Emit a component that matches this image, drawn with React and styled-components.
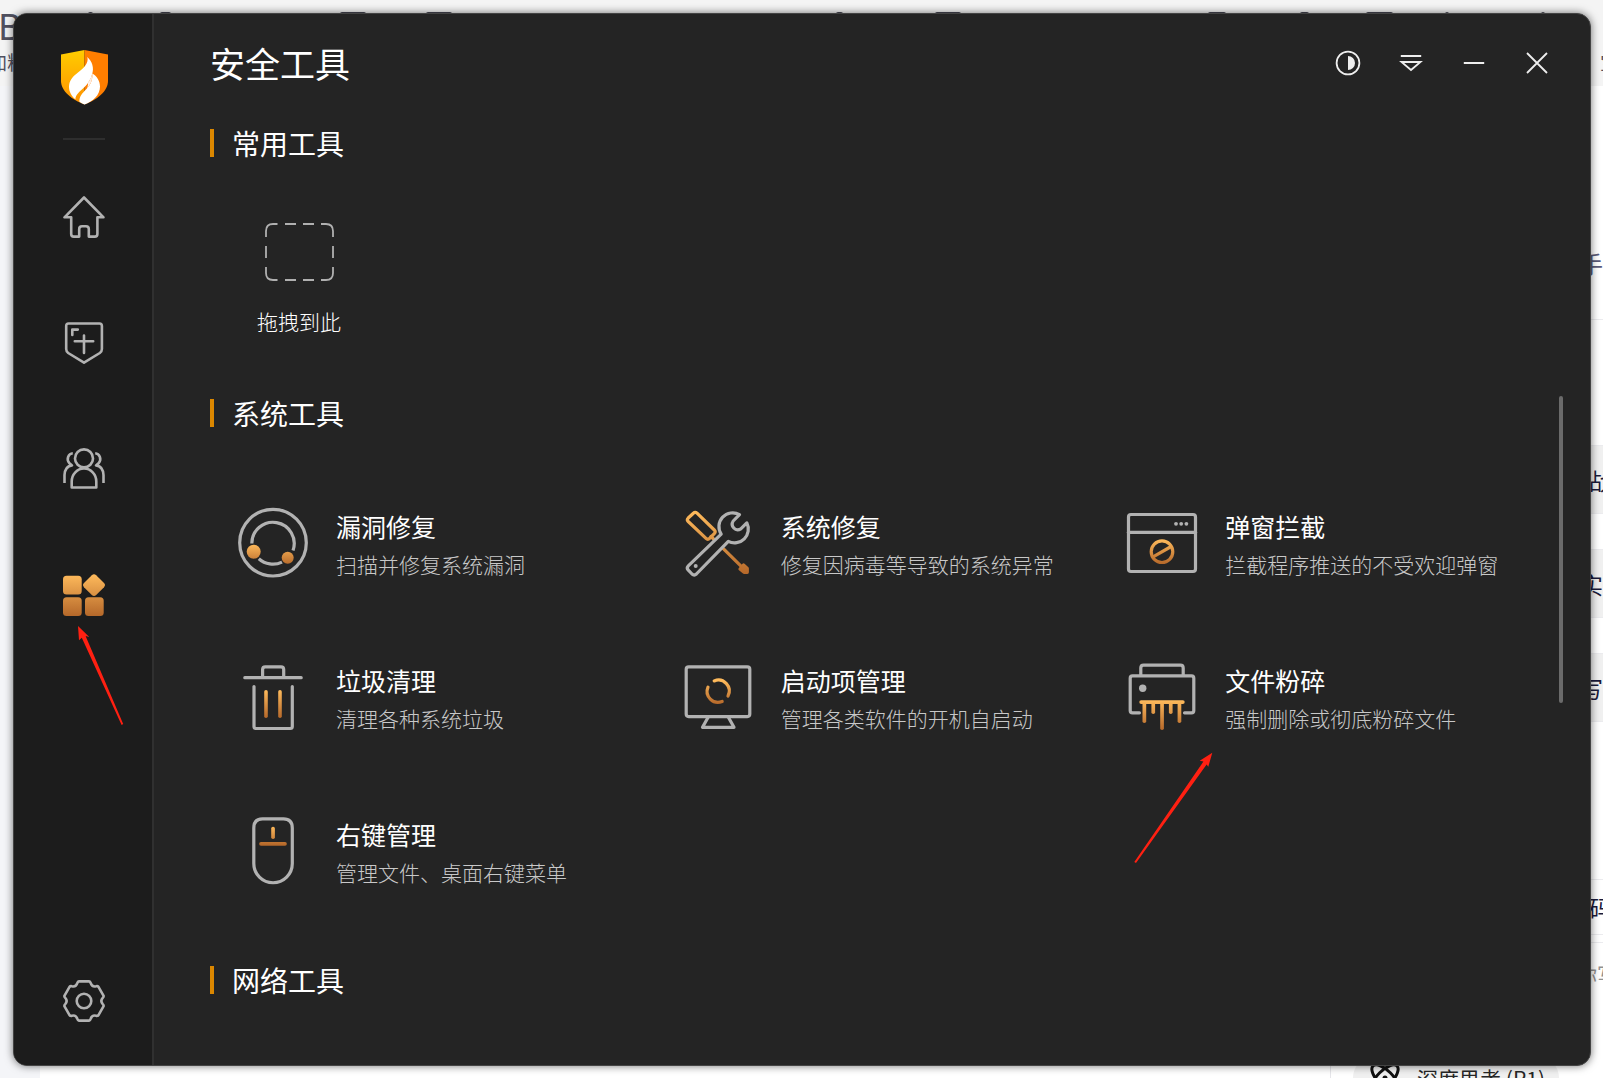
import styled, { createGlobalStyle, css } from 'styled-components';

const GlobalStyle = createGlobalStyle`
  * {
    box-sizing: border-box;
  }
  body {
    margin: 0;
    font-family: 'Noto Sans CJK SC', sans-serif;
  }
  button {
    margin: 0;
    padding: 0;
    border: 0;
    background: none;
    color: inherit;
    font: inherit;
    text-align: left;
    cursor: pointer;
  }
  svg {
    display: block;
    flex: none;
  }
`;

// the page behind and the window share one grid cell
const Desktop = styled.div`
  display: grid;
  grid-template-columns: minmax(0, 1fr);
  min-height: 100vh;
  overflow: hidden;

  > * {
    grid-area: 1 / 1;
  }
`;

/* ---------- page behind the window ---------- */

const Backdrop = styled.div`
  display: grid;
  grid-template-columns: 40px minmax(0, 1fr) 26px;
  grid-template-rows: 86px 1fr;
  overflow: hidden;
  background: #fff;
`;

const Toolbar = styled.div`
  grid-column: 1 / -1;
  display: flex;
  overflow: hidden;
  background: #f4f4f4;
  color: #50505f;
`;

const FormatItem = styled.div`
  display: flex;
  flex-direction: column;
  align-items: flex-end;
  width: 26px;
  padding-top: 4px;
  font-size: 19px;
  line-height: 24px;
  white-space: nowrap;
`;

const FormatLetter = styled.span`
  width: 28px;
  font: 36px / 46px 'Noto Sans', sans-serif;
`;

const ToolbarIcons = styled.svg`
  flex: 1;
  min-width: 0;
`;

const ToolbarEnd = styled.span`
  width: 3px;
  padding-top: 50px;
  font-size: 19px;
  line-height: 24px;
`;

const Gutter = styled.div`
  background: #f4f5f8;
`;

const PageBody = styled.div`
  display: flex;
  justify-content: flex-end;
  align-items: flex-end;
`;

const Composer = styled.div`
  height: 22px;
  padding: 0 18px 0 22px;
  border-left: 1px solid #e6e6ea;
`;

const ThinkButton = styled.button`
  display: flex;
  align-items: center;
  gap: 16px;
  height: 44px;
  padding: 0 14px 0 16px;
  border-radius: 22px;
  background: #f0f0f0;
  color: #262626;
  font-size: 21px;
  white-space: nowrap;
`;

const SideList = styled.div`
  display: flex;
  flex-direction: column;
  overflow: hidden;
  color: #1a1a3a;
  font-size: 23px;
  white-space: nowrap;
`;

const SideRow = styled.div`
  display: flex;
  align-items: center;
  justify-content: ${(p) => (p.$start ? 'flex-start' : 'flex-end')};
  height: ${(p) => p.$height}px;
  padding-left: ${(p) => (p.$start ? 12 : 0)}px;
  background: ${(p) => (p.$shade ? '#f0f0f0' : 'transparent')};
  border-bottom: 1px solid ${(p) => (p.$line ? '#ebebee' : 'transparent')};
  flex: none;
`;

const Placeholder = styled.span`
  width: 26px;
  color: #909090;
  font-size: 20px;
`;

const Muted = styled.span`
  color: #5a5a78;
`;

/* ---------- window ---------- */

const Window = styled.div`
  display: flex;
  margin: 13px 12px 12px 13px;
  border: 1px solid #444;
  border-radius: 14px;
  background: #242424;
  color: #fff;
  box-shadow: 0 0 9px rgba(0, 0, 0, 0.55);
  overflow: hidden;
  z-index: 1;
`;

const Sidebar = styled.nav`
  display: flex;
  flex-direction: column;
  align-items: center;
  flex: none;
  width: 140px;
  padding: 36px 0 43px 2px;
  border-right: 2px solid #303030;
  background: #1c1c1c;
`;

const Divider = styled.hr`
  width: 42px;
  height: 2px;
  margin: 33px 0 56px;
  border: 0;
  background: #2e2e2e;
`;

const NavList = styled.div`
  display: flex;
  flex-direction: column;
  gap: 84px;
  flex: 1;
`;

const NavButton = styled.button`
  position: relative;
  width: 42px;
  height: 42px;
`;

const Main = styled.main`
  position: relative;
  flex: 1;
  min-width: 0;
  padding: 0 19px 64px 56px;
`;

const Header = styled.header`
  display: flex;
  align-items: center;
  justify-content: space-between;
  height: 98px;
  margin-bottom: 13px;
`;

const Title = styled.h1`
  margin: 0;
  font-size: 35px;
  font-weight: 400;
  line-height: 48px;
`;

const WindowControls = styled.div`
  display: flex;
  gap: 37px;
  padding-right: 21px;
`;

const ControlButton = styled.button`
  width: 26px;
  height: 26px;
`;

const SectionTitle = styled.h2`
  display: flex;
  align-items: center;
  gap: 18px;
  margin: 0;
  font-size: 28px;
  font-weight: 400;
  line-height: 36px;

  &::before {
    content: '';
    width: 4px;
    height: 28px;
    background: #db8700;
  }
`;

const DropArea = styled.div`
  display: flex;
  flex-direction: column;
  align-items: center;
  gap: 26px;
  width: 84px;
  margin: 62px 0 60px 47px;
  font-size: 21px;
  font-weight: 300;
  line-height: 28px;
  white-space: nowrap;
`;

const ToolGrid = styled.div`
  display: grid;
  grid-template-columns: repeat(3, minmax(0, 1fr));
  row-gap: 82px;
  margin: 76px 0 75px 27px;
`;

const Tool = styled.button`
  position: relative;
  display: flex;
  align-items: center;
  gap: 27px;
  height: 72px;
  white-space: nowrap;
`;

const ToolText = styled.span`
  display: flex;
  flex-direction: column;
  gap: 4px;
  padding-top: 2px;
`;

const ToolName = styled.span`
  font-size: 25px;
  line-height: 36px;
`;

const ToolDesc = styled.span`
  color: #c8c8c8;
  font-size: 21px;
  font-weight: 300;
  line-height: 32px;
`;

const ScrollThumb = styled.div`
  position: absolute;
  top: 382px;
  right: 27px;
  width: 4px;
  height: 307px;
  border-radius: 2px;
  background: #6b6b6b;
`;

const arrowPlace = {
  nav: css`
    left: 13px;
    top: 50px;
  `,
  tool: css`
    left: 7px;
    top: 90px;
  `,
};

const Arrow = styled.svg`
  position: absolute;
  fill: #ff2012;
  pointer-events: none;
  ${(p) => arrowPlace[p.$place]}
`;

/* ---------- icons ---------- */

const LineSvg = styled.svg`
  fill: none;
  stroke: #b2b2b2;
  stroke-width: ${(p) => p.$line};
  stroke-linecap: round;
  stroke-linejoin: round;
`;

function NavIcon({ children }) {
  return (
    <LineSvg width="42" height="42" viewBox="0 0 42 42" $line={2.6}>
      {children}
    </LineSvg>
  );
}

function ToolIcon({ id, y1, y2, children }) {
  return (
    <LineSvg width="72" height="72" viewBox="0 0 72 72" $line={3.2}>
      <defs>
        <linearGradient id={id} gradientUnits="userSpaceOnUse" x1="0" x2="0" y1={y1} y2={y2}>
          <stop offset="0" stopColor="#ffbb5c" />
          <stop offset="1" stopColor="#b5682a" />
        </linearGradient>
      </defs>
      {children}
    </LineSvg>
  );
}

function Logo() {
  return (
    <svg width="47" height="55" viewBox="0 0 47 55">
      <defs>
        <linearGradient id="logoLeft" x1="0" x2="0" y1="0" y2="1">
          <stop offset="0" stopColor="#ffcd00" />
          <stop offset="1" stopColor="#ff9000" />
        </linearGradient>
        <linearGradient id="logoFold" x1="0" x2="1" y1="1" y2="0">
          <stop offset="0" stopColor="#fff" />
          <stop offset="1" stopColor="#ffe4d2" />
        </linearGradient>
      </defs>
      <path d="M23.5 0L0 4.5V31C0 41 11 50 23.5 54.5z" fill="url(#logoLeft)" />
      <path d="M23.5 0L47 4.5V31C47 41 36 50 23.5 54.5z" fill="#ff7e00" />
      <path d="M26.3 7C28 13 23 18 17 22.5C11 27 8 31 8 37C8 42 11 46.5 14.4 49.3C14.5 44.5 19 41.5 22.5 38C27 33.5 30 29 31 24.5C33.5 18 31 11 26.3 7z" fill="#fff" />
      <path d="M31.2 23.5C36 26 39 31 39 36.5C39 45 32 51.5 23.5 54.5C21.5 53.8 19.8 52.8 18.4 51.8C18 46.5 21.5 43 25 39.5C30 34.5 32 29 31.2 23.5z" fill="#fff" />
      <path d="M31.2 23.5C32 29 30 34 26 38.5C28 33 27 31 22.5 38C27 33.5 30 29 31.2 23.5z" fill="url(#logoFold)" />
    </svg>
  );
}

function gearPath() {
  const at = (x, y, i) => {
    const a = (i * Math.PI) / 3;
    const px = 21 + x * Math.cos(a) - y * Math.sin(a);
    const py = 21 + x * Math.sin(a) + y * Math.cos(a);
    return `${px.toFixed(2)} ${py.toFixed(2)}`;
  };
  let d = `M${at(-5, -19.6, 0)}`;
  for (let i = 0; i < 6; i++) {
    d += `L${at(5, -19.6, i)}Q${at(6.3, -19.4, i)} ${at(6.7, -17.8, i)}`;
    d += `Q${at(8, -13.8, i)} ${at(-6.7, -17.8, i + 1)}`;
    d += `Q${at(-6.3, -19.4, i + 1)} ${at(-5, -19.6, i + 1)}`;
  }
  return `${d}z`;
}

const navItems = [
  {
    label: '首页',
    icon: (
      <NavIcon>
        <path d="M21 1.5L1.5 21.3H8.2V38Q8.2 40.6 10.8 40.6H16.2V33Q16.2 30.2 19 30.2H23Q25.8 30.2 25.8 33V40.6H31.8Q34.4 40.6 34.4 38V21.3H40.5z" />
      </NavIcon>
    ),
  },
  {
    label: '病毒查杀',
    icon: (
      <NavIcon>
        <path d="M5.5 1.5H36.5Q38.9 1.5 38.9 4V27Q38.9 29.5 36.8 31L21 40.6L5.2 31Q3.2 29.5 3.2 27V4Q3.2 1.5 5.5 1.5z" />
        <path d="M9.3 13V7.6H14.8M11.8 19.3H30.2M21 13.5V31" />
      </NavIcon>
    ),
  },
  {
    label: '访问控制',
    icon: (
      <NavIcon>
        <circle cx="21" cy="10.4" r="9" />
        <path d="M8.7 39.5V33.5A12.3 13 0 0 1 33.3 33.5V39.5z" />
        <path strokeLinecap="butt" d="M9.8 5.2C5.5 5.5 3 11 6.2 15L9 17.4C4.5 17.6 1.5 22 1.5 27V35" />
        <path strokeLinecap="butt" d="M32.2 5.2C36.5 5.5 39 11 35.8 15L33 17.4C37.5 17.6 40.5 22 40.5 27V35" />
      </NavIcon>
    ),
  },
  {
    label: '安全工具',
    arrow: true,
    icon: (
      <svg width="42" height="42" viewBox="0 0 42 42">
        <defs>
          <linearGradient id="gridFill" gradientUnits="userSpaceOnUse" x1="0" x2="0" y1="0" y2="42">
            <stop offset="0" stopColor="#ffbb5c" />
            <stop offset="1" stopColor="#b5682a" />
          </linearGradient>
        </defs>
        <g fill="url(#gridFill)">
          <rect x="0" y="1.7" width="18.7" height="18.7" rx="3.5" />
          <path d="M28.8 1.2Q31 -.8 33.2 1.2L41 8.9Q43 11 41 13.2L33.2 21Q31 23 28.8 21L21 13.2Q19 11 21 8.9z" />
          <rect x="0" y="23.3" width="18.7" height="18.7" rx="3.5" />
          <rect x="22" y="23.3" width="18.7" height="18.7" rx="3.5" />
        </g>
      </svg>
    ),
  },
];

const tools = [
  {
    name: '漏洞修复',
    desc: '扫描并修复系统漏洞',
    icon: (
      <ToolIcon id="leak" y1="37" y2="58">
        <circle cx="36" cy="35.7" r="33.3" />
        <path strokeLinecap="butt" d="M14.8 36.5A21.2 21.2 0 1 1 56 43.5M21.8 51.7A21.2 21.2 0 0 0 45 55.1" />
        <circle cx="16.7" cy="44.7" r="7" fill="url(#leak)" stroke="none" />
        <circle cx="50.7" cy="50.7" r="6" fill="url(#leak)" stroke="none" />
      </ToolIcon>
    ),
  },
  {
    name: '系统修复',
    desc: '修复因病毒等导致的系统异常',
    icon: (
      <ToolIcon id="repair" y1="4" y2="67">
        <g stroke="url(#repair)">
          <path d="M11.4 6.2Q13.2 4.5 15 6.2L32.3 23Q34.2 24.8 32.3 26.6L27.6 31.4Q25.8 33.2 24 31.4L6.2 14.5Q4.5 12.8 6.2 11z" />
          <path d="M29 29.5L31.5 32M41.3 41.6L60 60.2" />
          <path d="M61.5 58L65.3 61.5V65.3H62L58 62z" fill="url(#repair)" />
        </g>
        <path d="M57.5 7.6A13.8 13.8 0 0 0 39.2 27.2L6.3 58.8Q4.2 61 6.3 63.2L10 67Q12.2 69 14.4 67L46.3 34.4A13.8 13.8 0 0 0 64.8 15.8L58.8 21.8Q54.8 24.3 51.8 21Q48.8 17.8 51.2 14z" />
        <circle cx="13.7" cy="59" r="2" fill="#b2b2b2" stroke="none" />
      </ToolIcon>
    ),
  },
  {
    name: '弹窗拦截',
    desc: '拦截程序推送的不受欢迎弹窗',
    icon: (
      <ToolIcon id="popup" y1="32" y2="57">
        <rect x="2.5" y="7.5" width="67" height="57" rx="2.5" />
        <path d="M2.5 25.3H69.5" />
        <g fill="#b2b2b2" stroke="none">
          <circle cx="50" cy="16.8" r="1.9" />
          <circle cx="55.2" cy="16.8" r="1.9" />
          <circle cx="60.4" cy="16.8" r="1.9" />
        </g>
        <g stroke="url(#popup)">
          <circle cx="36" cy="44.7" r="10.8" />
          <path d="M28 49.3L44.3 40" />
        </g>
      </ToolIcon>
    ),
  },
  {
    name: '垃圾清理',
    desc: '清理各种系统垃圾',
    icon: (
      <ToolIcon id="trash" y1="29" y2="57">
        <path d="M7.8 16.7H64.2M25.6 16V8.5Q25.6 5.8 28.3 5.8H44Q46.7 5.8 46.7 8.5V16M17 25.5V65.5Q17 67.5 19 67.5H53.3Q55.3 67.5 55.3 65.5V25.5" />
        <g fill="url(#trash)" stroke="none">
          <rect x="27.2" y="29" width="3.6" height="28" rx="1.8" />
          <rect x="41.2" y="29" width="3.6" height="28" rx="1.8" />
        </g>
      </ToolIcon>
    ),
  },
  {
    name: '启动项管理',
    desc: '管理各类软件的开机自启动',
    icon: (
      <ToolIcon id="boot" y1="19" y2="43">
        <rect x="4.2" y="5.8" width="63.6" height="49.8" rx="2.5" />
        <path d="M26 56.5L20.5 66.3H52L46.5 56.5" />
        <path stroke="url(#boot)" d="M32.2 19.9A10.9 10.9 0 0 1 46 35M40.2 40.5A10.9 10.9 0 0 1 26 26.2" />
      </ToolIcon>
    ),
  },
  {
    name: '文件粉碎',
    desc: '强制删除或彻底粉碎文件',
    arrow: true,
    icon: (
      <ToolIcon id="shred" y1="39" y2="69">
        <path d="M14.8 14V7Q14.8 4.2 17.6 4.2H54.4Q57.2 4.2 57.2 7V14" />
        <path d="M13.5 51.8H6.5Q4.2 51.8 4.2 49.5V17.2Q4.2 14.9 6.5 14.9H65.5Q67.8 14.9 67.8 17.2V49.5Q67.8 51.8 65.5 51.8H58.5" />
        <circle cx="16.7" cy="27.3" r="3.7" fill="#b2b2b2" stroke="none" />
        <g fill="url(#shred)" stroke="none">
          <rect x="13.3" y="39.2" width="45.4" height="3.8" rx="1.9" />
          <rect x="16.5" y="41" width="3.7" height="21" rx="1.8" />
          <rect x="25.4" y="41" width="3.7" height="12" rx="1.8" />
          <rect x="34.2" y="41" width="3.7" height="28" rx="1.8" />
          <rect x="42.9" y="41" width="3.7" height="12" rx="1.8" />
          <rect x="51.6" y="41" width="3.7" height="21" rx="1.8" />
        </g>
      </ToolIcon>
    ),
  },
  {
    name: '右键管理',
    desc: '管理文件、桌面右键菜单',
    icon: (
      <ToolIcon id="mouse" y1="11" y2="30">
        <path d="M16.8 13Q16.8 3.9 25.5 3.9H46.5Q55.3 3.9 55.3 13V48.5A19.25 19.25 0 0 1 16.8 48.5z" />
        <g fill="url(#mouse)" stroke="none">
          <rect x="34.2" y="11.7" width="3.7" height="12.3" rx="1.8" />
          <rect x="22.2" y="27" width="27.6" height="3.7" rx="1.8" />
        </g>
      </ToolIcon>
    ),
  },
];

const controls = [
  {
    label: '换肤',
    icon: (
      <>
        <circle cx="13" cy="13" r="11.4" />
        <path d="M13 6A7 7 0 0 1 13 20z" fill="#eee" stroke="none" />
      </>
    ),
  },
  { label: '菜单', icon: <path d="M2.8 6H23.2M3.5 12H22.5L13 20z" /> },
  { label: '最小化', icon: <path d="M2.8 13H23.2" /> },
  { label: '关闭', icon: <path d="M3 3L23 23M23 3L3 23" /> },
];

// left edge and width of every toolbar icon
const toolbarIcons = [
  [62, 5], [134, 11], [314, 26], [400, 26], [810, 7], [909, 26],
  [1182, 18], [1274, 9], [1340, 27], [1419, 4], [1515, 4],
];

function Page() {
  return (
    <Backdrop>
      <Toolbar>
        <FormatItem>
          <FormatLetter>B</FormatLetter>
          <span>加粗</span>
        </FormatItem>
        <ToolbarIcons height="86" fill="#454552">
          {toolbarIcons.map(([x, w]) => (
            <rect key={x} x={x} y="12" width={w} height="24" rx="2" />
          ))}
        </ToolbarIcons>
        <ToolbarEnd>宝</ToolbarEnd>
      </Toolbar>
      <Gutter />
      <PageBody>
        <Composer>
          <ThinkButton type="button">
            <svg width="32" height="32" viewBox="0 0 32 32" fill="none" stroke="#111" strokeWidth="3">
              <ellipse cx="16" cy="16" rx="17" ry="7.5" transform="rotate(45 16 16)" />
              <ellipse cx="16" cy="16" rx="17" ry="7.5" transform="rotate(-45 16 16)" />
              <circle cx="16" cy="16" r="2.5" fill="#111" stroke="none" />
            </svg>
            深度思考 (R1)
          </ThinkButton>
        </Composer>
      </PageBody>
      <SideList>
        <SideRow $height={120} />
        <SideRow $height={114} $line>
          <Muted>手</Muted>
        </SideRow>
        <SideRow $height={126} $line />
        <SideRow $height={68} $shade $start $line>战</SideRow>
        <SideRow $height={36} $line />
        <SideRow $height={68} $shade $line>实</SideRow>
        <SideRow $height={36} $line />
        <SideRow $height={68} $shade $line>写</SideRow>
        <SideRow $height={158} $line />
        <SideRow $height={55} $start $line>码</SideRow>
        <SideRow $height={8} $line />
        <SideRow $height={63}>
          <Placeholder>你写</Placeholder>
        </SideRow>
      </SideList>
    </Backdrop>
  );
}

function App() {
  return (
    <Desktop>
      <GlobalStyle />
      <Page />
      <Window>
        <Sidebar>
          <Logo />
          <Divider />
          <NavList>
            {navItems.map((item) => (
              <NavButton key={item.label} type="button" aria-label={item.label}>
                {item.icon}
                {item.arrow && (
                  <Arrow $place="nav" width="50" height="102">
                    <path d="M2 2L13.3 13L9.6 12L47.2 100L45.6 101L5.8 13.8L3 16.3z" />
                  </Arrow>
                )}
              </NavButton>
            ))}
          </NavList>
          <NavButton type="button" aria-label="设置">
            <NavIcon>
              <path d={gearPath()} />
              <circle cx="21" cy="21" r="7.3" />
            </NavIcon>
          </NavButton>
        </Sidebar>
        <Main>
          <Header>
            <Title>安全工具</Title>
            <WindowControls>
              {controls.map((c) => (
                <ControlButton key={c.label} type="button" aria-label={c.label}>
                  <svg width="26" height="26" fill="none" stroke="#eee" strokeWidth="1.8">
                    {c.icon}
                  </svg>
                </ControlButton>
              ))}
            </WindowControls>
          </Header>

          <SectionTitle>常用工具</SectionTitle>
          <DropArea>
            <svg width="69" height="58" fill="none" stroke="#b0b0b0" strokeWidth="1.8">
              <path d="M1 14V8Q1 1 8 1H12.5M56 1H61Q68 1 68 8V14M68 44V50Q68 57 61 57H56M12.5 57H8Q1 57 1 50V44" />
              <path d="M20 1H31M38 1H49M20 57H31M38 57H49M1 23V35M68 23V35" />
            </svg>
            <span>拖拽到此</span>
          </DropArea>

          <SectionTitle>系统工具</SectionTitle>
          <ToolGrid>
            {tools.map((tool) => (
              <Tool key={tool.name} type="button">
                {tool.icon}
                <ToolText>
                  <ToolName>{tool.name}</ToolName>
                  <ToolDesc>{tool.desc}</ToolDesc>
                </ToolText>
                {tool.arrow && (
                  <Arrow $place="tool" width="82" height="114">
                    <path d="M79.3 1.7L75.3 15.7L73.6 13.4L3 112L1.3 111L70.4 10.6L66.7 9.7z" />
                  </Arrow>
                )}
              </Tool>
            ))}
          </ToolGrid>

          <SectionTitle>网络工具</SectionTitle>
          <ScrollThumb />
        </Main>
      </Window>
    </Desktop>
  );
}

export default App;
